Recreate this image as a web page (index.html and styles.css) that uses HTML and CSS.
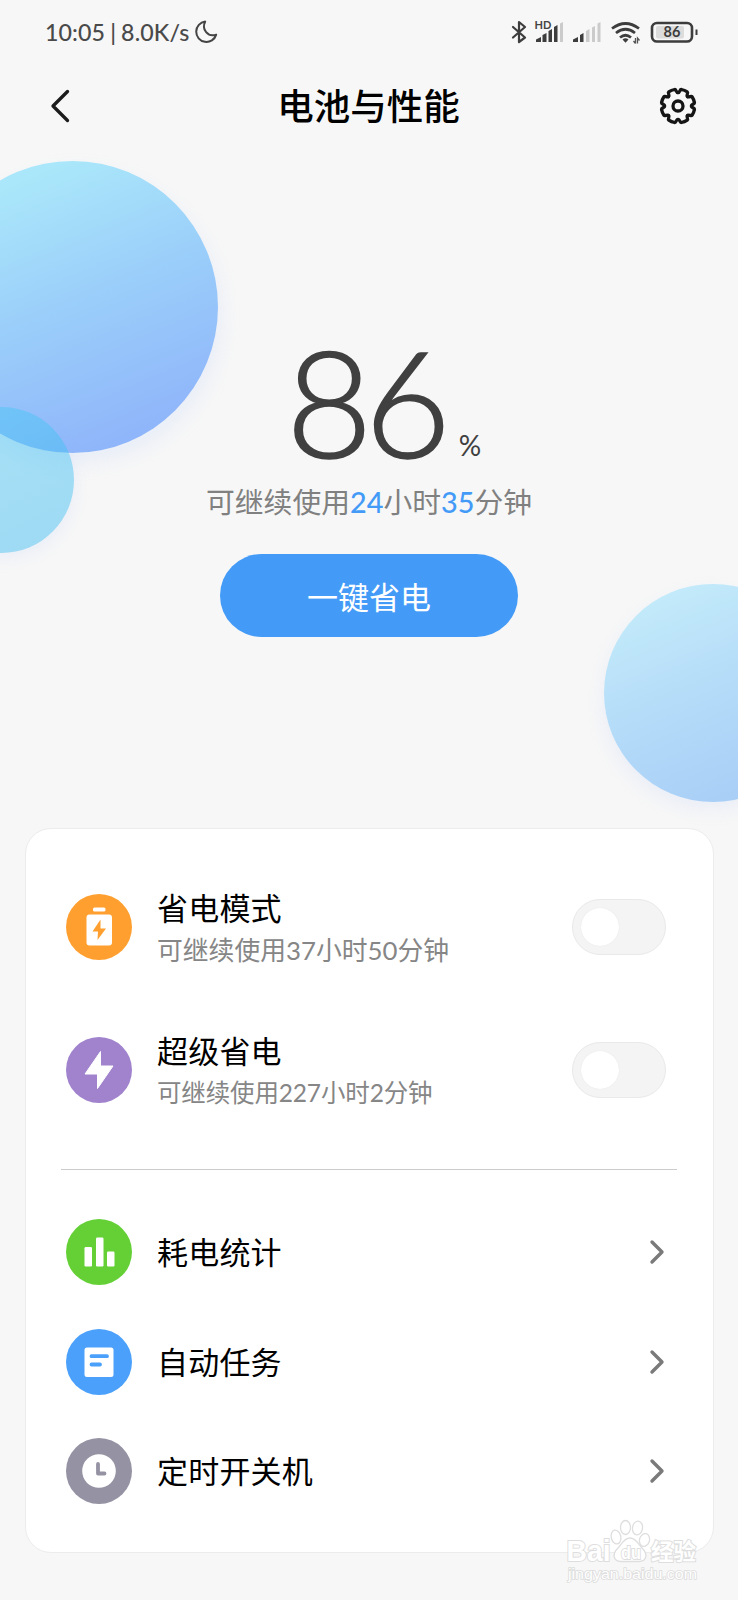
FILE: index.html
```html
<!DOCTYPE html>
<html lang="zh-CN">
<head>
<meta charset="utf-8">
<title>电池与性能</title>
<link rel="stylesheet" href="styles.css">
</head>
<body>
<div class="screen">
  <div class="bubble bubble-large"></div>
  <div class="bubble bubble-small"></div>
  <div class="bubble bubble-right"></div>

  <div class="status">
    <span class="status-text">10:05<span class="sep">|</span>8.0K/s</span>
    <svg class="moon" width="24" height="24" viewBox="0 0 24 24"><path d="M11.2 1.6A10.2 10.2 0 1 0 22.2 14.6C14 17.5 7.2 9.500 11.2 1.600Z" fill="none" stroke="#444" stroke-width="2" stroke-linejoin="round"/></svg>
    <svg class="status-icons" width="190" height="28" viewBox="508 18 190 28">
      <g fill="none" stroke="#3d3d3d" stroke-width="2.200" stroke-linejoin="round" stroke-linecap="round">
        <path d="M513 27L525 37.500L519 42V22L525 27L513 37.500"/>
      </g>
      <text x="534.500" y="28.500" class="hd">HD</text>
      <g fill="#3d3d3d">
        <path d="M536 39.500L541 37V42H536ZM542.500 35L546.500 33V42H542.500ZM548.500 31L552 29V42H548.500ZM554 27L557.500 25V42H554Z"/>
        <path d="M573 39.500L578 37V42H573ZM580 35L583.500 33V42H580Z"/>
      </g>
      <g fill="#cbcbcb">
        <path d="M560 23.500L563 22V42H560ZM586 31L589.500 29V42H586ZM592 27.500L595 26V42H592ZM597.500 23.500L600.500 22V42H597.500Z"/>
      </g>
      <g fill="none" stroke="#3d3d3d" stroke-width="2.700">
        <path d="M612 28.500Q625.500 18.500 639 28.500"/>
        <path d="M616 33Q625.500 25.500 635 33"/>
        <path d="M620 37.500Q625.500 33 631 37.500"/>
      </g>
      <path d="M622.500 39.500Q625.500 37 628.500 39.500L625.500 42.700Z" fill="#3d3d3d"/>
      <path d="M635.500 38V43.500M633.500 41L635.500 43.500M637.500 43.500V38L639.500 40.500" fill="none" stroke="#555" stroke-width="1.300"/>
      <rect x="652" y="23" width="40" height="18.500" rx="5" fill="none" stroke="#3d3d3d" stroke-width="2.600"/>
      <rect x="656" y="26" width="28" height="12.500" rx="2" fill="#dcdcdc"/>
      <path d="M696.500 29.500V35" stroke="#3d3d3d" stroke-width="2"/>
      <text x="672" y="37" class="level" text-anchor="middle">86</text>
    </svg>
  </div>

  <header class="header">
    <svg width="36" height="36" viewBox="0 0 36 36"><path d="M25.500 3.500L11 18L25.500 32.500" fill="none" stroke="#1c1c1c" stroke-width="3.300" stroke-linecap="round" stroke-linejoin="round"/></svg>
    <h1>电池与性能</h1>
    <svg width="38" height="38" viewBox="-19 -19 38 38">
      <g fill="none" stroke="#151515" stroke-width="3.300" stroke-linecap="round">
        <path id="tooth" d="M0 -13.400C2.200 -13.400 1.600 -16.800 3.400 -16.500A16.800 16.800 0 0 1 9.260 -14.070C10.750 -13.010 7.920 -11.030 9.480 -9.480"/>
        <use href="#tooth" transform="rotate(45)"/><use href="#tooth" transform="rotate(90)"/>
        <use href="#tooth" transform="rotate(135)"/><use href="#tooth" transform="rotate(180)"/>
        <use href="#tooth" transform="rotate(225)"/><use href="#tooth" transform="rotate(270)"/>
        <use href="#tooth" transform="rotate(315)"/>
        <circle r="5"/>
      </g>
    </svg>
  </header>

  <section class="hero">
    <div class="percent"><span class="number">86</span><span class="unit">%</span></div>
    <p class="remain">可继续使用<b>24</b>小时<b>35</b>分钟</p>
    <button class="save">一键省电</button>
  </section>

  <main class="card">
    <div class="row mode">
      <svg class="icon" viewBox="0 0 66 66"><circle cx="33" cy="33" r="33" fill="#ff9f2f"/><rect x="27" y="13.500" width="12.500" height="4" rx="1.500" fill="#fff"/><rect x="20.500" y="20.500" width="25.500" height="31" rx="3" fill="#fff"/><path d="M34.500 25.500L26.500 37.500H32L31.500 46L40 34.500H34.500Z" fill="#ff9f2f"/></svg>
      <div class="label"><h2>省电模式</h2><p>可继续使用37小时50分钟</p></div>
      <span class="toggle"></span>
    </div>
    <div class="row mode">
      <svg class="icon" viewBox="0 0 66 66"><circle cx="33" cy="33" r="33" fill="#a082cd"/><path d="M34.500 14.500L19 37H31.500V51.500L47 29H34.500Z" fill="#fff" stroke="#fff" stroke-width="1" stroke-linejoin="round"/></svg>
      <div class="label small"><h2>超级省电</h2><p>可继续使用227小时2分钟</p></div>
      <span class="toggle"></span>
    </div>
    <hr>
    <div class="row link">
      <svg class="icon" viewBox="0 0 66 66"><circle cx="33" cy="33" r="33" fill="#64d036"/><g fill="#fff"><rect x="18.500" y="28" width="7.500" height="19.500" rx="1.200"/><rect x="30" y="18.500" width="7.500" height="29" rx="1.200"/><rect x="41" y="32.500" width="7.500" height="15" rx="1.200"/></g></svg>
      <h2>耗电统计</h2>
      <svg class="chevron" viewBox="0 0 16 26"><path d="M3 3L13 13L3 23"/></svg>
    </div>
    <div class="row link">
      <svg class="icon" viewBox="0 0 66 66"><circle cx="33" cy="33" r="33" fill="#4aa0fa"/><rect x="18.500" y="18.500" width="29" height="29.500" rx="2.500" fill="#fff"/><path d="M25.500 27.200H41M25.500 35.500H34" stroke="#4aa0fa" stroke-width="3.800" stroke-linecap="round"/></svg>
      <h2>自动任务</h2>
      <svg class="chevron" viewBox="0 0 16 26"><path d="M3 3L13 13L3 23"/></svg>
    </div>
    <div class="row link">
      <svg class="icon" viewBox="0 0 66 66"><circle cx="33" cy="33" r="33" fill="#9492a3"/><circle cx="33" cy="33" r="16.800" fill="#fff"/><path d="M32 26V35.500H38.500" fill="none" stroke="#9492a3" stroke-width="3.800" stroke-linecap="round" stroke-linejoin="round"/></svg>
      <h2>定时开关机</h2>
      <svg class="chevron" viewBox="0 0 16 26"><path d="M3 3L13 13L3 23"/></svg>
    </div>
  </main>

  <svg class="watermark" width="140" height="70" viewBox="562 1515 140 70">
    <g fill="#fff" stroke="#dedede" stroke-width="1.300">
      <ellipse cx="616" cy="1537" rx="4.800" ry="7" transform="rotate(-12 616 1537)"/>
      <ellipse cx="625.500" cy="1527.500" rx="5" ry="7"/>
      <ellipse cx="637.500" cy="1528" rx="5" ry="7" transform="rotate(8 637.500 1528)"/>
      <ellipse cx="644.500" cy="1540" rx="5" ry="6.500" transform="rotate(15 644.500 1540)"/>
      <path d="M630 1538C636 1538 638 1544 642 1548C648 1554 647 1561 639 1561.500H621C613 1561 612 1554 618 1548C622 1544 624 1538 630 1538Z"/>
      <text class="wm-brand" x="566.500" y="1561" textLength="44" lengthAdjust="spacingAndGlyphs">Bai</text>
      <text class="wm-du" x="621" y="1559" textLength="20" lengthAdjust="spacingAndGlyphs">du</text>
      <text class="wm-cn" x="651" y="1560" textLength="45" lengthAdjust="spacingAndGlyphs">经验</text>
    </g>
    <text class="wm-url" x="568" y="1579" textLength="129" lengthAdjust="spacingAndGlyphs">jingyan.baidu.com</text>
  </svg>
</div>
</body>
</html>
```
FILE: styles.css
```css
* { box-sizing: border-box; }

body {
  margin: 0;
  background: #f7f7f7;
  color: #000;
  font-family: Lato, "Noto Sans CJK SC", sans-serif;
}

h1, h2, p { margin: 0; font-weight: 400; }

.screen {
  position: relative;
  width: 738px;
  height: 1600px;
  overflow: hidden;
  display: flex;
  flex-direction: column;
}

/* Decorative bubbles behind the content */
.bubble { position: absolute; border-radius: 50%; }

.bubble-large {
  left: -73px;
  top: 161px;
  width: 291px;
  height: 292px;
  background: linear-gradient(157deg, #aae7fa 14%, #9bcffa 48%, #8fb5fa 88%);
  box-shadow: 4px 10px 20px rgba(150, 185, 255, .14);
}

.bubble-small {
  left: -71px;
  top: 407px;
  width: 145px;
  height: 146px;
  background: linear-gradient(155deg, rgba(70, 200, 245, .45), rgba(60, 185, 240, .48));
  box-shadow: 2px 6px 16px rgba(150, 185, 255, .12);
}

.bubble-right {
  left: 604px;
  top: 584px;
  width: 218px;
  height: 218px;
  background: linear-gradient(157deg, #c3ebfa 10%, #b4dbf8 50%, #a9cff7 85%);
  box-shadow: -2px 8px 18px rgba(150, 185, 255, .12);
}

.status {
  position: relative;
  height: 64px;
  padding: 0 40px 0 45px;
  display: flex;
  align-items: center;
}

.status-text {
  font-family: Lato, sans-serif;
  font-size: 23.2px;
  font-weight: 500;
  letter-spacing: .1px;
  color: #4a4a4a;
  white-space: nowrap;
}

.sep { margin: 0 5px; }
.moon { margin-left: 5px; }
.status-icons { margin-left: auto; }
.hd { font: 700 11px Lato, sans-serif; fill: #444; }
.level { font: 700 14.5px Lato, sans-serif; fill: #3d3d3d; }

.header {
  position: relative;
  height: 84px;
  padding: 0 41px 0 42px;
  display: flex;
  align-items: center;
  justify-content: space-between;
}

.header h1 {
  font-size: 36.5px;
  font-weight: 500;
  line-height: 54px;
}

.hero {
  position: relative;
  height: 680px;
  padding-top: 198px;
  display: flex;
  flex-direction: column;
  align-items: center;
}

.percent {
  height: 127px;
  width: 298px;
  padding-left: 66px;
  display: flex;
  align-items: baseline;
  color: #404040;
}

.number {
  font-size: 149px;
  font-weight: 300;
  line-height: 110px;
  letter-spacing: -8px;
  -webkit-text-stroke: 1.6px #404040;
}

.unit {
  position: relative;
  top: -2px;
  margin-left: 16px;
  font-size: 28px;
}

.remain {
  height: 81px;
  line-height: 58px;
  font-size: 28.8px;
  color: #808080;
  white-space: nowrap;
}

.remain b { font-weight: 500; color: #449bf7; }

.save {
  width: 298px;
  height: 83px;
  border: 0;
  border-radius: 42px;
  background: #449bf7;
  color: #fff;
  font: 400 31px "Noto Sans CJK SC", sans-serif;
}

.card {
  position: relative;
  width: 689px;
  height: 725px;
  margin-left: 25px;
  padding: 26px 47px 0 40px;
  border: 1px solid #ececec;
  border-radius: 26px;
  background: #fff;
}

.row { display: flex; align-items: center; }
.mode { height: 143.5px; }
.link { height: 109.4px; }
.icon { width: 66px; height: 66px; margin-right: 25px; flex: none; }

h2 {
  font-size: 31px;
  line-height: 46px;
  letter-spacing: .2px;
}

.label { padding-top: 2px; }
.label h2 { line-height: 42px; padding-bottom: 2px; }

.label p {
  font-size: 25.8px;
  line-height: 38px;
  color: #868686;
  white-space: nowrap;
}

.label.small p { font-size: 24.5px; letter-spacing: -.15px; }

.toggle {
  width: 94px;
  height: 56px;
  margin-left: auto;
  padding: 8px;
  border: 1px solid #e9e9e9;
  border-radius: 28px;
  background: #f4f4f4;
}

.toggle::before {
  content: "";
  display: block;
  width: 38px;
  height: 38px;
  border-radius: 50%;
  background: #fff;
  box-shadow: 0 0 1px #ddd;
}

hr {
  height: 1px;
  margin: 26.5px -11px 28px -5px;
  border: 0;
  background: #ccc;
}

.chevron { width: 16px; height: 26px; margin: 0 1px 0 auto; }

.chevron path {
  fill: none;
  stroke: #7a7a7a;
  stroke-width: 3.4;
  stroke-linecap: round;
  stroke-linejoin: round;
}

/* Site mark laid over the bottom corner of the card */
.watermark { position: absolute; left: 562px; top: 1515px; }
.watermark text { paint-order: stroke; }
.wm-brand { font: 700 29px "Liberation Sans", sans-serif; stroke-width: 2; }
.wm-du { font: 700 19px "Liberation Sans", sans-serif; stroke-width: 2; }
.wm-cn { font: 700 23px "Noto Sans CJK SC", sans-serif; stroke-width: 2; }
.wm-url {
  font: 400 15.5px "Liberation Sans", sans-serif;
  fill: #fff;
  stroke: #dcdcdc;
  stroke-width: 1.6;
}
```
